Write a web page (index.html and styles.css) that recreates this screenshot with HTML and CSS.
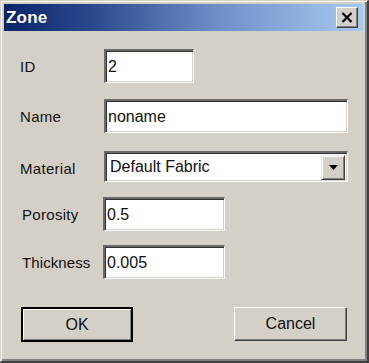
FILE: index.html
```html
<!DOCTYPE html>
<html>
<head>
<meta charset="utf-8">
<link rel="stylesheet" href="styles.css">
</head>
<body>
<div class="window">
  <div class="titlebar">
    <span class="title">Zone</span>
    <div class="close">
      <svg width="12" height="11" viewBox="0 0 12 11"><path d="M1.5 1 L10.5 10 M10.5 1 L1.5 10" stroke="#000" stroke-width="2.2" fill="none"/></svg>
    </div>
  </div>
  <div class="content">
    <div class="form">
      <div class="label">ID</div>
      <div class="cell"><div class="field w-id">2</div></div>
      <div class="label">Name</div>
      <div class="cell"><div class="field w-full">noname</div></div>
      <div class="label">Material</div>
      <div class="cell">
        <div class="field combo w-full">
          <span class="combo-text">Default Fabric</span>
          <div class="drop">
            <svg width="9" height="5" viewBox="0 0 9 5"><path d="M0 0 H9 L4.5 5 Z" fill="#000"/></svg>
          </div>
        </div>
      </div>
      <div class="label">Porosity</div>
      <div class="cell"><div class="field w-mid">0.5</div></div>
      <div class="label">Thickness</div>
      <div class="cell"><div class="field w-mid">0.005</div></div>
    </div>
    <div class="buttons">
      <div class="btn btn-default"><span>OK</span></div>
      <div class="btn"><span>Cancel</span></div>
    </div>
  </div>
</div>
</body>
</html>
```
FILE: styles.css
```css
* { box-sizing: border-box; }
html, body { margin: 0; padding: 0; background: #d4d0c8; }
body { font-family: "Liberation Sans", Arial, sans-serif; color: #000; }

.window {
  width: 369px;
  height: 363px;
  background: #d4d0c8;
  border-style: solid;
  border-width: 1px 2px 2px 1px;
  border-color: #d4d0c8 #404040 #404040 #d4d0c8;
  box-shadow: inset 1px 1px 0 #fff, inset -2px -2px 0 #808080;
  padding: 3px 4px 4px 3px;
  display: flex;
  flex-direction: column;
}

.titlebar {
  height: 27px;
  background: linear-gradient(to right, #0a246a 0%, #2a4a8e 25%, #6f90c8 60%, #a6caf0 100%);
  display: flex;
  align-items: center;
  justify-content: space-between;
  padding: 0 5px 0 2px;
}
.title {
  color: #fff;
  font-weight: bold;
  font-size: 17px;
  letter-spacing: 0.2px;
}
.close {
  width: 22px;
  height: 21px;
  background: #d4d0c8;
  border: 1px solid;
  border-color: #fff #404040 #404040 #fff;
  box-shadow: inset -1px -1px 0 #808080;
  display: flex;
  align-items: center;
  justify-content: center;
}

.content {
  flex: 1;
  display: flex;
  flex-direction: column;
  padding: 18px 16px 0 16px;
}

.form {
  display: grid;
  grid-template-columns: 84px 1fr;
  grid-template-rows: 50px 52px 46px 48px 35px;
}
.label {
  font-size: 15px;
  letter-spacing: 0.3px;
  display: flex;
  align-items: center;
  height: 34px;
  color: #111;
}
.form .label:nth-of-type(9) { padding-left: 2px; letter-spacing: 0.1px; }
.form .label:nth-of-type(7) { padding-left: 2px; }
.cell { align-self: start; }

.field {
  height: 34px;
  background: #fff;
  border-style: solid;
  border-width: 2px 1px 1px 2px;
  border-color: #6a6a6a #fff #fff #6a6a6a;
  box-shadow: inset 1px 1px 0 #303030, inset -1px -1px 0 #d4d0c8;
  font-size: 16px;
  padding: 0 0 0 2px;
  display: flex;
  align-items: center;
  color: #111;
}
.w-id { width: 90px; }
.w-full { width: 244px; }
.w-mid { width: 122px; margin-left: -1px; }

.combo { height: 31px; justify-content: space-between; padding-right: 2px; }
.combo-text { padding-left: 2px; }
.drop {
  width: 24px;
  height: 25px;
  background: #d4d0c8;
  border: 1px solid;
  border-color: #e8e6e0 #404040 #404040 #e8e6e0;
  box-shadow: inset 1px 1px 0 #fff, inset -1px -1px 0 #808080;
  display: flex;
  align-items: center;
  justify-content: center;
}

.buttons {
  margin-top: 27px;
  display: flex;
  justify-content: space-between;
  padding: 0 0 0 1px;
}
.btn {
  width: 113px;
  height: 34px;
  background: #d4d0c8;
  border: 1px solid;
  border-color: #fff #404040 #404040 #fff;
  box-shadow: inset -1px -1px 0 #808080;
  font-size: 16px;
  display: flex;
  align-items: center;
  justify-content: center;
  color: #111;
}
.btn-default {
  width: 112px;
  height: 35px;
  border: 2px solid #000;
  box-shadow: inset 1px 1px 0 #fff, inset -1px -1px 0 #808080;
}
```
